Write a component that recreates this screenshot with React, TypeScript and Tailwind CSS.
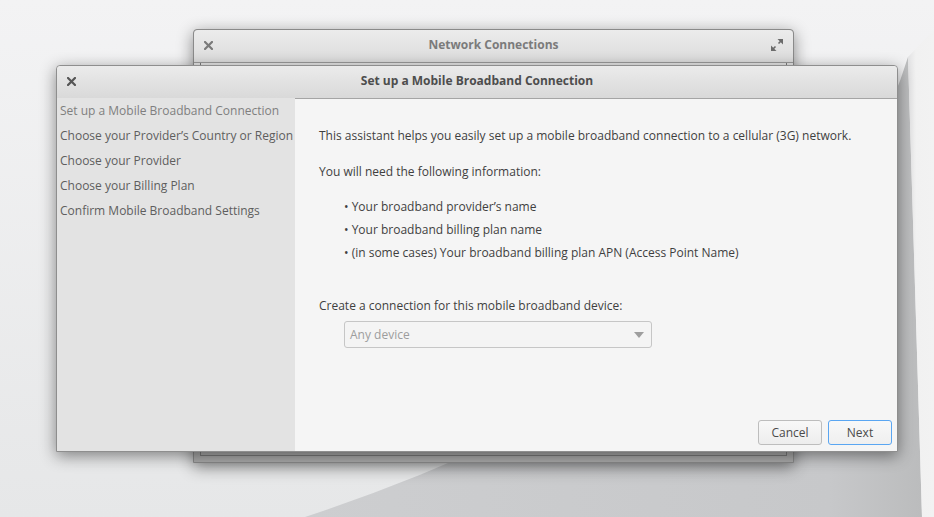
import React from "react";

const font = { fontFamily: '"Open Sans", "Noto Sans", sans-serif' };

function CloseIcon({ color }: { color: string }) {
  return (
    <svg width="9" height="9" viewBox="0 0 9 9">
      <path d="M1 1 L8 8 M8 1 L1 8" stroke={color} strokeWidth="2.2" strokeLinecap="square" />
    </svg>
  );
}

function ExpandIcon() {
  return (
    <svg width="12" height="12" viewBox="0 0 12 12">
      <polygon points="6.5,0 12,0 12,5.5" fill="#6b6b6b" />
      <path d="M10.5 1.5 L7.5 4.5" stroke="#6b6b6b" strokeWidth="1.6" />
      <polygon points="0,6.5 0,12 5.5,12" fill="#6b6b6b" />
      <path d="M1.5 10.5 L4.5 7.5" stroke="#6b6b6b" strokeWidth="1.6" />
    </svg>
  );
}

function Wallpaper() {
  return (
    <svg className="absolute inset-0" width="934" height="517" viewBox="0 0 934 517">
      <defs>
        <linearGradient id="bg" x1="0" y1="0" x2="0" y2="1">
          <stop offset="0" stopColor="#f3f3f4" />
          <stop offset="1" stopColor="#e6e7e8" />
        </linearGradient>
        <linearGradient id="curl" x1="0" y1="0" x2="1" y2="0">
          <stop offset="0" stopColor="#cdced0" />
          <stop offset="0.85" stopColor="#c7c8ca" />
          <stop offset="1" stopColor="#bbbcbd" />
        </linearGradient>
        <linearGradient id="strip" x1="0" y1="0" x2="1" y2="0">
          <stop offset="0" stopColor="#e2e2e3" />
          <stop offset="0.3" stopColor="#f1f1f1" />
          <stop offset="1" stopColor="#f2f2f2" />
        </linearGradient>
      </defs>
      <rect width="934" height="517" fill="url(#bg)" />
      <path d="M305 517 Q600 420 800 250 Q880 150 908 57 L922 517 Z" fill="url(#curl)" />
      <path d="M908 57 L934 30 L934 517 L922 517 Z" fill="url(#strip)" />
    </svg>
  );
}

export default function App() {
  return (
    <div className="relative w-[934px] h-[517px] overflow-hidden" style={font}>
      <Wallpaper />

      {/* Back window: Network Connections */}
      <div className="absolute left-[193px] top-[29px] w-[601px] h-[434px] flex flex-col rounded-t-[4px] border border-[#8a8a8a] shadow-[0_4px_16px_rgba(0,0,0,0.45)] bg-[#ababab]">
        <div className="h-[33px] flex items-center rounded-t-[4px] bg-gradient-to-b from-[#ececec] to-[#dcdcdc] border-b border-[#9c9c9c] px-[10px] pb-[2px]">
          <div className="w-[20px] flex items-center">
            <CloseIcon color="#7a7a7a" />
          </div>
          <div className="flex-1 text-center text-[12px] font-bold text-[#7b7b7b]">Network Connections</div>
          <div className="w-[20px] flex justify-end">
            <ExpandIcon />
          </div>
        </div>
        <div className="flex-1 flex flex-col bg-[linear-gradient(#e6e6e6_0,#e6e6e6_4px,#ababab_4px)] px-[6px] pb-[6px]">
          <div className="flex-1 border border-[#7c7c7c] border-t-0"></div>
        </div>
      </div>

      {/* Front dialog */}
      <div className="absolute left-[56px] top-[65px] w-[842px] h-[387px] flex flex-col rounded-t-[4px] border border-[#8e8e8e] shadow-[0_4px_16px_rgba(0,0,0,0.45)] bg-[#f5f5f5]">
        <div className="h-[33px] flex items-center rounded-t-[4px] bg-gradient-to-b from-[#ebebeb] to-[#d9d9d9] border-b border-[#a5a5a5] px-[10px] pb-[2px]">
          <div className="w-[20px] flex items-center">
            <CloseIcon color="#555555" />
          </div>
          <div className="flex-1 text-center text-[12px] font-bold text-[#4d4d4d] pr-[20px]">
            Set up a Mobile Broadband Connection
          </div>
        </div>
        <div className="flex-1 flex min-h-0">
          <div className="w-[238px] bg-[#e3e3e3] pl-[3px] -mt-[1px] pt-0 text-[12px] leading-[25px] text-[#5e5e5e] whitespace-nowrap">
            <div className="text-[#7f7f7f]">Set up a Mobile Broadband Connection</div>
            <div>Choose your Provider’s Country or Region</div>
            <div>Choose your Provider</div>
            <div>Choose your Billing Plan</div>
            <div>Confirm Mobile Broadband Settings</div>
          </div>
          <div className="flex-1 flex flex-col pl-[24px] text-[12px] text-[#3f3f3f]">
            <p className="leading-[18px] mt-[28px]">
              This assistant helps you easily set up a mobile broadband connection to a cellular (3G) network.
            </p>
            <p className="leading-[18px] mt-[18px]">You will need the following information:</p>
            <ul className="leading-[23px] mt-[14px] pl-[25px]">
              <li>• Your broadband provider’s name</li>
              <li>• Your broadband billing plan name</li>
              <li>• (in some cases) Your broadband billing plan APN (Access Point Name)</li>
            </ul>
            <p className="leading-[18px] mt-[33px]">Create a connection for this mobile broadband device:</p>
            <div className="ml-[25px] mt-[6px] w-[308px] h-[27px] flex items-center justify-between rounded-[3px] border border-[#c6c6c6] bg-[#f4f4f4] pl-[5px] pr-[7px]">
              <span className="text-[#9d9d9d]">Any device</span>
              <svg width="10" height="6" viewBox="0 0 10 6">
                <polygon points="0,0 10,0 5,6" fill="#9e9e9e" />
              </svg>
            </div>
            <div className="flex-1"></div>
            <div className="flex justify-end gap-[6px] pr-[5px] pb-[6px]">
              <button className="w-[64px] h-[25px] rounded-[3px] border border-[#bdbdbd] bg-gradient-to-b from-[#f8f8f8] to-[#ededed] text-[12px] text-[#4a4a4a]">
                Cancel
              </button>
              <button className="w-[64px] h-[25px] rounded-[3px] border border-[#5aa6f2] bg-gradient-to-b from-[#f8f8f8] to-[#efefef] text-[12px] text-[#4a4a4a]">
                Next
              </button>
            </div>
          </div>
        </div>
      </div>
    </div>
  );
}
